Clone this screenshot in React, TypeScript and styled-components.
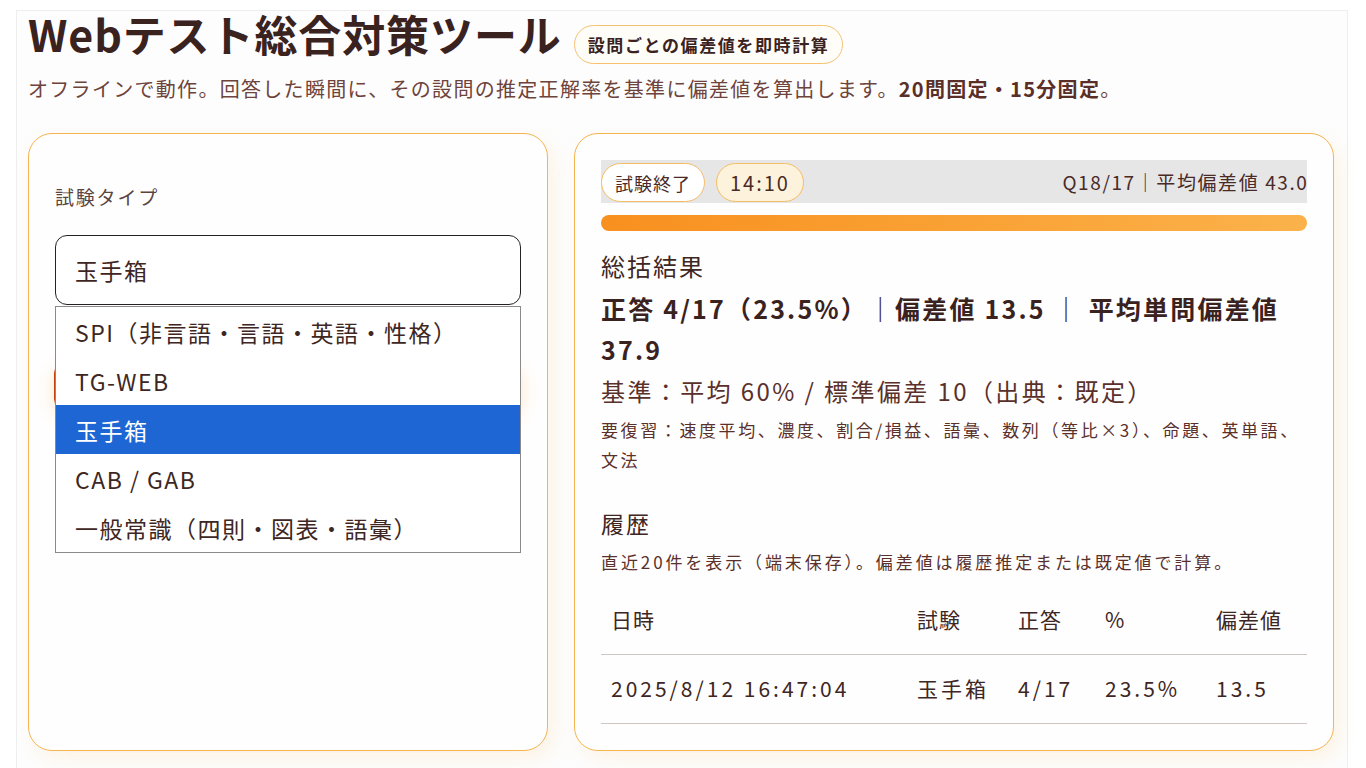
import styled, { createGlobalStyle } from "styled-components";

const GlobalStyle = createGlobalStyle`
  html, body {
    margin: 0;
    padding: 0;
    background: #ffffff;
  }
  body {
    font-family: "Noto Sans CJK JP", "Noto Sans", sans-serif;
    color: #4a2a27;
  }
  * { box-sizing: border-box; }
`;

const Page = styled.div`
  margin: 10px 18px 0 16px;
  padding: 0 13px 10px 11px;
  border: 1px solid #eeeeee;
  border-bottom: none;
  background: #fdfdfd;
  min-height: 758px;
`;

const Header = styled.header`
  display: flex;
  align-items: baseline;
  gap: 12px;
  margin-top: -3px;
`;

const Title = styled.h1`
  margin: 0;
  font-size: 43px;
  font-weight: 700;
  color: #3a221f;
  letter-spacing: 0.9px;
  line-height: 50px;
`;

const Badge = styled.span`
  display: inline-flex;
  align-items: center;
  height: 39px;
  padding: 0 13px;
  border: 1.5px solid #f5c272;
  border-radius: 20px;
  font-size: 17px;
  font-weight: 700;
  letter-spacing: 1.6px;
  color: #3a221f;
  background: #fffdf8;
`;

const Lead = styled.p`
  margin: 9px 0 0;
  font-size: 20px;
  letter-spacing: 1.3px;
  line-height: 32px;
  color: #6e433c;
  b { color: #5a2f28; }
`;

const Columns = styled.div`
  display: grid;
  grid-template-columns: 520px 1fr;
  gap: 26px;
  margin-top: 28px;
`;

const Card = styled.section`
  background: #fffefe;
  border: 1.5px solid #f4b44f;
  border-radius: 24px;
  padding: 26px;
  height: 618px;
  box-shadow: 6px 8px 18px rgba(250, 200, 120, 0.18);
`;

const Label = styled.div`
  margin-top: 24px;
  font-size: 19px;
  line-height: 26px;
  letter-spacing: 1.8px;
  color: #5b4440;
`;

const SelectWrap = styled.div`
  position: relative;
  margin-top: 25px;
`;

const SelectBox = styled.div`
  height: 70px;
  border: 1.5px solid #262222;
  border-radius: 12px;
  padding: 0 19px;
  display: flex;
  align-items: center;
  font-size: 23px;
  letter-spacing: 1.5px;
  color: #3e2623;
  background: #fff;
`;

const StartButton = styled.button`
  display: block;
  width: calc(100% + 1px);
  height: 46px;
  margin: 58px 0 0 -1px;
  border: none;
  border-radius: 10px;
  background: linear-gradient(90deg, #c8400c, #f08a24);
  box-shadow: 0 6px 18px rgba(240, 170, 70, 0.28);
  font-family: inherit;
  font-size: 18px;
  color: #fff;
`;

const OptionList = styled.ul`
  position: absolute;
  top: 71px;
  left: 0;
  right: 0;
  margin: 0;
  padding: 0;
  list-style: none;
  background: #fff;
  border: 1px solid #8a8a8a;
  z-index: 2;
`;

const OptionItem = styled.li<{ $active?: boolean }>`
  height: 49px;
  display: flex;
  align-items: center;
  padding: 0 19px;
  font-size: 23px;
  letter-spacing: 1.5px;
  color: ${(p) => (p.$active ? "#ffffff" : "#3e2623")};
  background: ${(p) => (p.$active ? "#1d66d4" : "transparent")};
`;

const StatusBar = styled.div`
  display: flex;
  align-items: center;
  gap: 11px;
  height: 43px;
  background: #e6e6e6;
`;

const Pill = styled.span<{ $warm?: boolean }>`
  display: inline-flex;
  align-items: center;
  height: 39px;
  margin-top: 2px;
  padding: 0 13px;
  border: 1.5px solid #f5bd66;
  border-radius: 20px;
  background: ${(p) => (p.$warm ? "#fdf3dc" : "#ffffff")};
  font-size: ${(p) => (p.$warm ? "20px" : "18px")};
  letter-spacing: ${(p) => (p.$warm ? "2px" : "1px")};
  color: #4a2a27;
`;

const StatusText = styled.span`
  margin-left: auto;
  font-size: 19px;
  letter-spacing: 1.6px;
  margin-right: -1.5px;
  color: #4a2a27;
`;

const Progress = styled.div`
  margin-top: 12px;
  height: 16px;
  border-radius: 8px;
  background: linear-gradient(90deg, #f8901f, #fbb24a);
`;

const SectionTitle = styled.h2<{ $size?: number }>`
  margin: 0;
  font-size: ${(p) => p.$size ?? 24}px;
  line-height: 34px;
  letter-spacing: 2px;
  font-weight: 400;
  color: #3e2623;
`;

const Summary = styled.div`
  margin-top: 18px;
`;

const BigLine = styled.div`
  margin-top: 5px;
  font-size: 25px;
  font-weight: 700;
  letter-spacing: 2.2px;
  line-height: 41px;
  color: #3a221f;
`;

const Basis = styled.div`
  margin-top: 4px;
  font-size: 24px;
  letter-spacing: 2.4px;
  line-height: 34px;
  color: #5a302b;
`;

const Small = styled.div<{ $spacing?: number }>`
  margin-top: 7px;
  font-size: 17px;
  letter-spacing: ${(p) => p.$spacing ?? 2.6}px;
  line-height: 30px;
  color: #5a302b;
`;

const History = styled.div`
  margin-top: 31px;
`;

const Table = styled.table`
  width: 100%;
  margin-top: 8px;
  border-collapse: collapse;
  color: #3e2623;
`;

const Th = styled.th<{ $w?: string }>`
  width: ${(p) => p.$w ?? "auto"};
  text-align: left;
  font-weight: 400;
  font-size: 21px;
  letter-spacing: 1px;
  line-height: 25px;
  padding: 22px 10px;
  border-bottom: 1px solid #cfc6c4;
`;

const Td = styled.td`
  font-size: 21px;
  letter-spacing: 3px;
  line-height: 25px;
  padding: 21px 10px 22px;
  border-bottom: 1px solid #cfc6c4;
`;

const options = [
  "SPI（非言語・言語・英語・性格）",
  "TG-WEB",
  "玉手箱",
  "CAB / GAB",
  "一般常識（四則・図表・語彙）",
];

export default function App() {
  return (
    <>
      <GlobalStyle />
      <Page>
        <Header>
          <Title>Webテスト総合対策ツール</Title>
          <Badge>設問ごとの偏差値を即時計算</Badge>
        </Header>
        <Lead>
          オフラインで動作。回答した瞬間に、その設問の推定正解率を基準に偏差値を算出します。
          <b>20問固定・15分固定</b>。
        </Lead>

        <Columns>
          <Card>
            <Label>試験タイプ</Label>
            <SelectWrap>
              <SelectBox>玉手箱</SelectBox>
              <OptionList>
                {options.map((o) => (
                  <OptionItem key={o} $active={o === "玉手箱"}>
                    {o}
                  </OptionItem>
                ))}
              </OptionList>
              <StartButton>開始</StartButton>
            </SelectWrap>
          </Card>

          <Card>
            <StatusBar>
              <Pill>試験終了</Pill>
              <Pill $warm>14:10</Pill>
              <StatusText>Q18/17｜平均偏差値 43.0</StatusText>
            </StatusBar>
            <Progress />

            <Summary>
              <SectionTitle>総括結果</SectionTitle>
              <BigLine>正答 4/17（23.5%）｜偏差値 13.5 ｜ 平均単問偏差値 37.9</BigLine>
              <Basis>基準：平均 60% / 標準偏差 10（出典：既定）</Basis>
              <Small>要復習：速度平均、濃度、割合/損益、語彙、数列（等比×3）、命題、英単語、文法</Small>
            </Summary>

            <History>
              <SectionTitle $size={23}>履歴</SectionTitle>
              <Small $spacing={2.9}>直近20件を表示（端末保存）。偏差値は履歴推定または既定値で計算。</Small>
              <Table>
                <thead>
                  <tr>
                    <Th $w="306px">日時</Th>
                    <Th $w="101px">試験</Th>
                    <Th $w="87px">正答</Th>
                    <Th $w="111px">%</Th>
                    <Th>偏差値</Th>
                  </tr>
                </thead>
                <tbody>
                  <tr>
                    <Td>2025/8/12 16:47:04</Td>
                    <Td>玉手箱</Td>
                    <Td>4/17</Td>
                    <Td>23.5%</Td>
                    <Td>13.5</Td>
                  </tr>
                </tbody>
              </Table>
            </History>
          </Card>
        </Columns>
      </Page>
    </>
  );
}
